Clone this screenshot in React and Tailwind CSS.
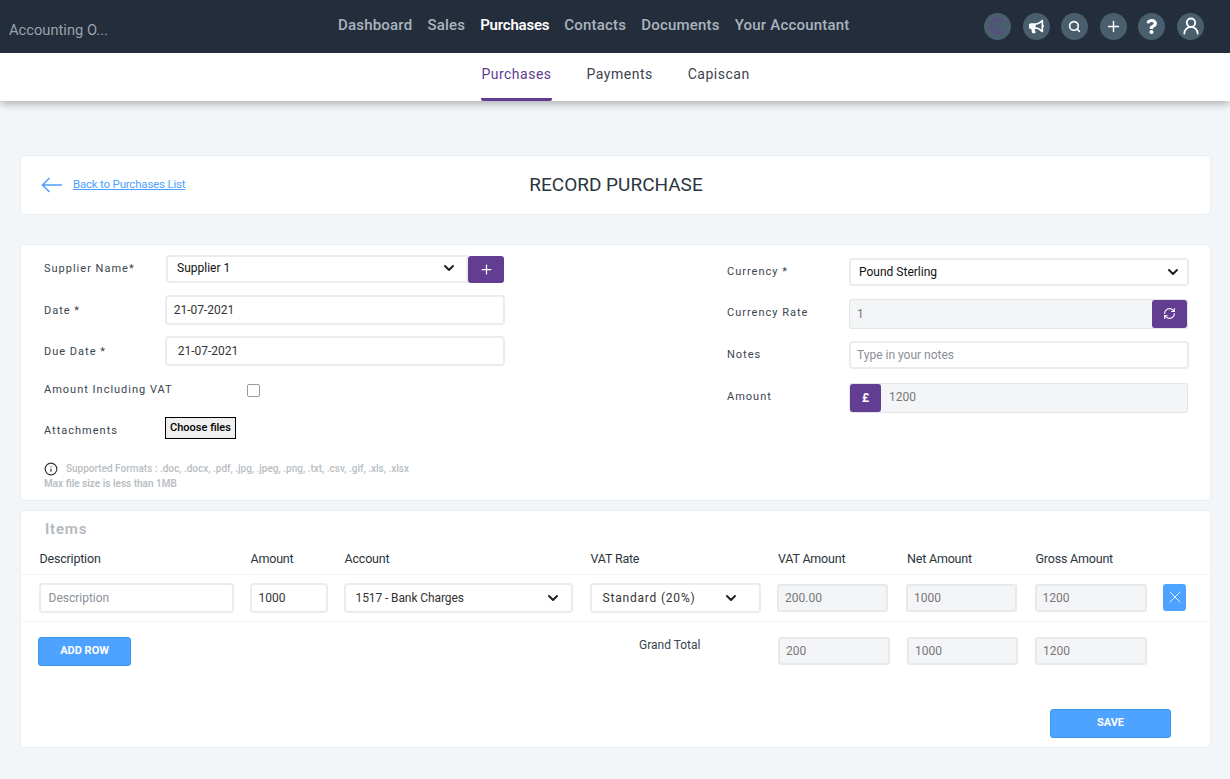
import React from 'react';
import { ChevronDown, Info, Plus, RefreshCw, Search, UserRound, X } from 'lucide-react';
import { FaBullhorn, FaQuestion } from 'react-icons/fa';

const navItems = ['Dashboard', 'Sales', 'Purchases', 'Contacts', 'Documents', 'Your Accountant'];
const columns = ['Description', 'Amount', 'Account', 'VAT Rate', 'VAT Amount', 'Net Amount', 'Gross Amount'];
const gridCols = 'grid grid-cols-[211px_94px_246px_187.5px_129px_128.5px_128.5px_23px]';

const IconButton = ({ children }) => (
  <div className="w-[27px] h-[27px] rounded-full bg-[#4a5f6e] flex items-center justify-center text-white">
    {children}
  </div>
);

const Label = ({ children, className = '' }) => (
  <label className={`text-[11px] tracking-[1px] text-[#3a4450] ${className}`}>{children}</label>
);

const Field = ({ children, className = '', tall = false }) => (
  <div className={`${tall ? 'h-[30px] -my-[1px]' : 'h-[28px]'} rounded-[4px] border-2 border-[#ebecee] bg-white flex items-center text-[12px] ${className}`}>
    {children}
  </div>
);

const ReadOnly = ({ value, className = '' }) => (
  <div className={`h-[28px] rounded-[3px] border-2 border-[#e8e9eb] bg-[#f4f5f7] flex items-center pl-[6px] text-[12px] text-[#777] ${className}`}>
    {value}
  </div>
);

export default function App() {
  return (
    <div className="min-h-[779px] bg-[#f3f6f9] font-['Roboto',sans-serif]">
      <header className="h-[53px] bg-[#232d3b] flex items-center relative">
        <div className="absolute left-[9px] top-[19px] text-[14.7px] text-[#9aa3ab]">Accounting O...</div>
        <nav className="ml-[338px] flex gap-[15px] -mt-[2px] text-[15px] tracking-[0.2px] text-[#aab4bd]">
          {navItems.map((item) => (
            <span key={item} className={item === 'Purchases' ? 'text-white font-semibold tracking-[-0.2px]' : 'font-medium'}>{item}</span>
          ))}
        </nav>
        <div className="ml-auto mr-[26px] flex gap-[11.6px] -mt-[1px]">
          <IconButton>
            <svg width="20" height="20" viewBox="0 0 20 20" fill="none" stroke="#5b4a85" strokeWidth="2.4">
              <path d="M15.5 5.5a7 7 0 1 0 0 9" />
              <path d="M12 8.3a2.6 2.6 0 1 0 0 3.4" strokeWidth="1" />
            </svg>
          </IconButton>
          <IconButton><FaBullhorn size={15} /></IconButton>
          <IconButton><Search size={13} strokeWidth={3} /></IconButton>
          <IconButton><Plus size={17} strokeWidth={2} /></IconButton>
          <IconButton><FaQuestion size={15} /></IconButton>
          <IconButton><UserRound size={20} strokeWidth={2.2} /></IconButton>
        </div>
      </header>

      <div className="h-[48px] bg-white shadow-[0_3px_8px_rgba(0,0,0,0.28)] flex justify-center gap-[35px] pl-[1px] text-[14px] tracking-[0.5px] text-[#3a4450]">
        <div className="h-full pt-[11px] text-[#5f3d92] border-b-[3px] border-[#5f3d92] rounded-b-[2px]">Purchases</div>
        <div className="pt-[11px]">Payments</div>
        <div className="pt-[11px]">Capiscan</div>
      </div>

      <main className="pl-[20px] pr-[19px] pt-[54px]">
        <section className="h-[60px] bg-white border border-[#ebeef1] rounded-[4px] flex items-center relative pl-[20px]">
          <svg width="21" height="16" viewBox="0 0 21 16" fill="none" stroke="#4d9fff" strokeWidth="1.5">
            <path d="M21 8H1.5M8.5 1 1.5 8l7 7" />
          </svg>
          <a className="ml-[11px] text-[11.5px] tracking-[-0.2px] underline text-[#4d9fff]">Back to Purchases List</a>
          <h1 className="absolute left-0 right-[-1px] text-center text-[19px] text-[#2b3640] pointer-events-none">RECORD PURCHASE</h1>
        </section>

        <section className="mt-[29px] h-[257px] bg-white border border-[#ebeef1] rounded-[4px] flex pl-[23px] pt-[10px]">
          <div className="w-[461px]">
            <div className="flex items-center h-[28px]">
              <Label className="w-[122px]">Supplier Name*</Label>
              <Field className="w-[302px] pl-[9px] pr-[9px] pb-[2px] justify-between rounded-r-none text-[#111]">
                Supplier 1
                <ChevronDown size={16} strokeWidth={3} className="text-[#222]" />
              </Field>
              <div className="w-[36px] h-[27px] rounded-[3px] bg-[#623d92] flex items-center justify-center text-white">
                <Plus size={15} />
              </div>
            </div>
            <div className="flex items-center h-[28px] mt-[13px]">
              <Label className="w-[121px] mt-[2px]">Date *</Label>
              <Field tall className="w-[341px] pl-[7px] text-[11.5px] text-[#333]">21-07-2021</Field>
            </div>
            <div className="flex items-center h-[28px] mt-[13px]">
              <Label className="w-[121px] mt-[2px]">Due Date *</Label>
              <Field tall className="w-[341px] pl-[11px] text-[11.5px] text-[#333]">21-07-2021</Field>
            </div>
            <div className="flex items-center mt-[16px] h-[18px]">
              <Label className="w-[203px]">Amount Including VAT</Label>
              <input type="checkbox" className="w-[13px] h-[13px] appearance-none border border-[#9a9a9a] rounded-[2px] bg-white" />
            </div>
            <div className="flex items-center mt-[18px] h-[22px]">
              <Label className="w-[121px] mt-[6px]">Attachments</Label>
              <button className="w-[71px] h-[22px] border border-black bg-[#efefef] text-[11px] font-medium text-black">Choose files</button>
            </div>
            <div className="mt-[22px] text-[10px] font-medium text-[#b9bec3] leading-[15px]">
              <div className="flex items-center">
                <Info size={14} className="text-[#333] mr-[8px]" />
                Supported Formats : .doc, .docx, .pdf, .jpg, .jpeg, .png, .txt, .csv, .gif, .xls, .xlsx
              </div>
              <div className="font-semibold">Max file size is less than 1MB</div>
            </div>
          </div>

          <div className="ml-[222px] w-[462px] pt-[3px]">
            <div className="flex items-center h-[28px]">
              <Label className="w-[122px]">Currency *</Label>
              <Field className="w-[340px] pl-[8px] pr-[6px] justify-between text-[#111]">
                Pound Sterling
                <ChevronDown size={16} strokeWidth={3} className="text-[#222]" />
              </Field>
            </div>
            <div className="flex items-center h-[30px] mt-[12.5px]">
              <Label className="w-[122px]">Currency Rate</Label>
              <div className="w-[339px] h-[30px] flex p-[1px] bg-[#e4e5e7] rounded-[3px]">
                <div className="flex-1 bg-[#f4f5f7] rounded-l-[3px] flex items-center pl-[7px] text-[12px] text-[#777]">1</div>
                <div className="w-[35px] rounded-[3px] bg-[#623d92] flex items-center justify-center text-white">
                  <RefreshCw size={13} />
                </div>
              </div>
            </div>
            <div className="flex items-center h-[28px] mt-[12.5px]">
              <Label className="w-[122px]">Notes</Label>
              <Field className="w-[340px] pl-[6px] text-[#8a9097]">Type in your notes</Field>
            </div>
            <div className="flex items-center h-[30px] mt-[13.5px]">
              <Label className="w-[122px]">Amount</Label>
              <div className="w-[339px] h-[30px] flex p-[1px] bg-[#e4e5e7] rounded-[3px]">
                <div className="w-[31px] rounded-[3px] bg-[#623d92] flex items-center justify-center text-white text-[12px] font-bold">£</div>
                <div className="flex-1 bg-[#f4f5f7] rounded-r-[3px] flex items-center pl-[8px] pb-[1px] text-[12px] text-[#777]">1200</div>
              </div>
            </div>
          </div>
        </section>

        <section className="mt-[9px] h-[238px] bg-white border border-[#ebeef1] rounded-[4px] relative">
          <h2 className="pl-[24px] pt-[9px] text-[15px] leading-[18px] font-semibold tracking-[0.8px] text-[#b3b8bd]">Items</h2>
          <div className={`${gridCols} pl-[18.5px] mt-[12px] pb-[5px] border-b border-[#f2f3f5] text-[12.5px] tracking-[-0.2px] text-[#2b3640]`}>
            {columns.map((col) => <div key={col}>{col}</div>)}
          </div>
          <div className={`${gridCols} pl-[17.5px] py-[9px] border-b border-[#f2f3f5]`}>
            <Field tall className="w-[195px] pl-[8px] text-[#8a9097]">Description</Field>
            <Field tall className="w-[78px] pl-[7px] text-[#333]">1000</Field>
            <Field tall className="w-[229px] pl-[10px] pr-[10px] justify-between text-[11.5px] tracking-[-0.1px] text-[#333]">
              1517 - Bank Charges
              <ChevronDown size={16} strokeWidth={3} className="text-[#222]" />
            </Field>
            <Field tall className="w-[171px] pl-[11px] pr-[20px] justify-between tracking-[0.8px] text-[#333]">
              Standard (20%)
              <ChevronDown size={16} strokeWidth={3} className="text-[#222]" />
            </Field>
            <ReadOnly value="200.00" className="w-[111px]" />
            <ReadOnly value="1000" className="w-[111px]" />
            <ReadOnly value="1200" className="w-[112px]" />
            <div className="h-[27px] rounded-[3px] bg-[#4da3ff] flex items-center justify-center text-white">
              <X size={20} strokeWidth={1} />
            </div>
          </div>
          <div className="flex items-start pl-[17px] mt-[15px]">
            <button className="w-[93px] h-[29px] rounded-[3px] bg-[#4da3ff] border border-[#3b96ee] text-white text-[11px] font-bold">ADD ROW</button>
            <div className="ml-[508px] w-[139px] text-[12px] text-[#3a4450] -mt-[1px]">Grand Total</div>
            <div className="flex gap-[17px]">
              <ReadOnly value="200" className="w-[112px]" />
              <ReadOnly value="1000" className="w-[111px]" />
              <ReadOnly value="1200" className="w-[112px]" />
            </div>
          </div>
          <div className="flex justify-end pr-[39px] mt-[43px]">
            <button className="w-[121px] h-[29px] rounded-[3px] bg-[#4da3ff] border border-[#3b96ee] text-white text-[11px] font-bold">SAVE</button>
          </div>
        </section>
      </main>
    </div>
  );
}
